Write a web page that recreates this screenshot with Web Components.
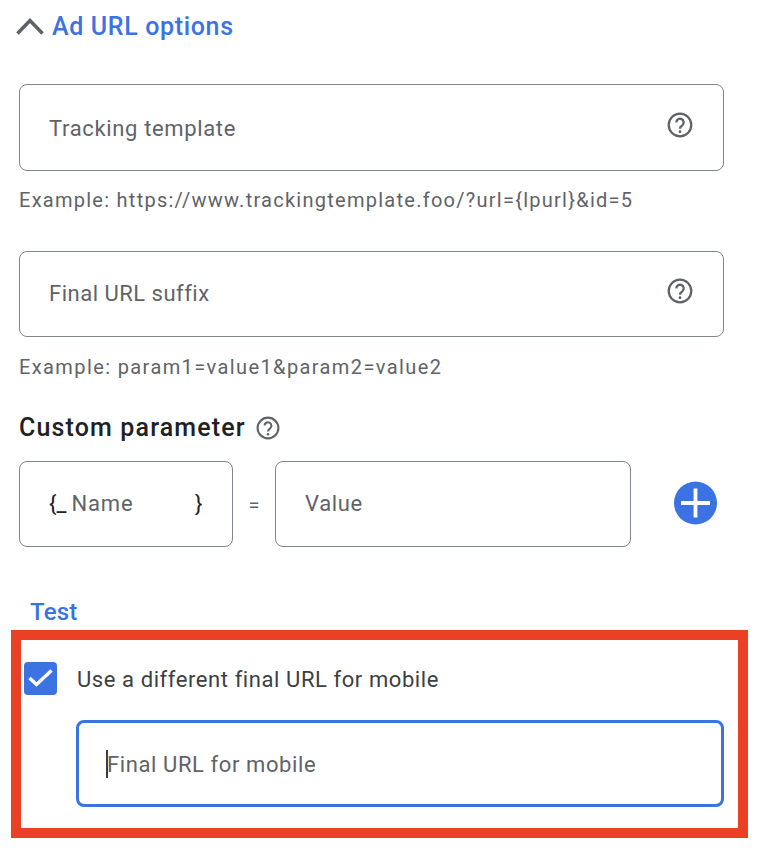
<!DOCTYPE html>
<html><head><meta charset="utf-8"><style>
html,body{margin:0;background:#fff}
body{width:764px;height:862px;overflow:hidden;font-family:Roboto,sans-serif}
</style></head><body>
<url-options></url-options>
<script>
const HELP=(s,extra='')=>`<svg ${extra} width="${s}" height="${s}" viewBox="0 0 24 24" fill="none" aria-hidden="true"><circle cx="12" cy="12" r="10.4" stroke="#5f6368" stroke-width="2.1"/><path d="M8.6 9.6a3.4 3.4 0 1 1 5.5 2.7c-1.2.9-2.1 1.6-2.1 3.1" stroke="#5f6368" stroke-width="2.1"/><circle cx="12" cy="18.2" r="1.3" fill="#5f6368"/></svg>`;
class TextField extends HTMLElement{
  constructor(){super();const r=this.attachShadow({mode:'open'});
  r.innerHTML=`<style>
  :host{display:flex;box-sizing:border-box;height:var(--h,87px);align-items:center;border:1px solid #80868b;border-radius:8px;padding-left:29px;padding-right:var(--pr,29px);background:#fff;color:#5f6368;font:22px/28px Roboto,sans-serif;letter-spacing:var(--ls,.65px);position:relative}
  .t{flex:1;white-space:nowrap;position:relative;top:var(--t,1px)}
  ::slotted(svg){position:relative;top:-3px}
  </style><span class="t"><slot></slot></span><slot name="end"></slot>`;}
}
class HelpText extends HTMLElement{
  constructor(){super();const r=this.attachShadow({mode:'open'});
  r.innerHTML=`<style>:host{display:block;font:20px/24px Roboto,sans-serif;color:#5f6368;letter-spacing:var(--hs,1.26px);white-space:nowrap}</style><slot></slot>`;}
}
class UrlOptions extends HTMLElement{
  constructor(){super();const r=this.attachShadow({mode:'open'});
  r.innerHTML=`<style>
  :host{display:block;box-sizing:border-box;width:764px;height:862px;padding:0 40px 0 19px;font-family:Roboto,sans-serif}
  .head{display:flex;align-items:center;gap:8px;height:52px;margin-left:-3px}
  .head span{font:500 25px/30px Roboto,sans-serif;color:#3b73e3;letter-spacing:.65px;position:relative;top:1px}
  .f1{margin-top:32px}
  help-text{margin-top:17px}
  .f2{margin-top:39px;--h:86px;--t:0px;--ls:.5px}
  .h2{margin-top:18px;--hs:1.39px}
  .cp{display:flex;align-items:center;gap:10px;margin-top:33px;height:32px;font:500 25px/32px Roboto,sans-serif;color:#202124;letter-spacing:1.15px;white-space:nowrap}
  .row{display:flex;align-items:center;margin-top:17px}
  .name{width:214px;flex:none;--h:86px;--t:0px;--ls:.9px;color:#5f6368}
  .b{color:#202124;font-size:22px;letter-spacing:0}
  .n{margin-left:5px}
  .eq{width:42px;text-align:center;font:20px/24px Roboto,sans-serif;color:#5f6368;position:relative;top:1px}
  .val{width:356px;flex:none;--h:86px;--t:0px}
  .plus{margin-left:43px;position:relative;top:-1px;display:block}
  .test{margin:50px 0 0 11px;font:500 24px/30px Roboto,sans-serif;color:#3b73e3;letter-spacing:.2px}
  .box{box-sizing:border-box;margin:3px 0 0 -8px;width:737px;height:208px;border:10px solid #ea4025;padding:22px 14px 0 3px}
  .chk{display:flex;align-items:center;gap:20px;height:33px}
  .cb{width:33px;height:33px;flex:none;background:#3b73e3;border-radius:4px;display:block}
  .chk span{font:22px/28px Roboto,sans-serif;color:#3c4043;letter-spacing:.58px;white-space:nowrap;position:relative;top:1px}
  .inp{box-sizing:border-box;height:87px;margin:25px 0 0 52px;border:3px solid #3b73e3;border-radius:8px;display:flex;align-items:center;padding-left:27px;font:22px/28px Roboto,sans-serif;color:#5f6368;letter-spacing:.6px}
  .inp span{position:relative;top:1px}
  .caret{width:2px;height:28px;background:#3c4043;margin-right:-1px;flex:none}
  </style>
  <div class="head"><svg width="28" height="18" viewBox="0 0 28 18" fill="none"><path d="M1.500 16.500 14 3.500 26.500 16.500" stroke="#5f6368" stroke-width="3.600"/></svg><span>Ad URL options</span></div>
  <text-field class="f1">Tracking template${HELP(26,'slot="end"')}</text-field>
  <help-text>Example: https://www.trackingtemplate.foo/?url={lpurl}&amp;id=5</help-text>
  <text-field class="f2" >Final URL suffix${HELP(26,'slot="end"')}</text-field>
  <help-text class="h2">Example: param1=value1&amp;param2=value2</help-text>
  <div class="cp"><span>Custom parameter</span>${HELP(24)}</div>
  <div class="row"><text-field class="name"><span class="b">{_</span><span class="n">Name</span><span class="b" style="position:absolute;left:146px">}</span></text-field><div class="eq">=</div><text-field class="val">Value</text-field>
  <svg class="plus" width="43" height="44" viewBox="0 0 43 44"><circle cx="21.500" cy="22" r="21.500" fill="#3b73e3"/><path d="M7 22h29M21.500 7.500v29" stroke="#fff" stroke-width="3.800"/></svg></div>
  <div class="test">Test</div>
  <div class="box">
    <div class="chk"><svg class="cb" viewBox="0 0 33 33"><path d="M5.500 16 12.500 22.500 27.500 8.500" fill="none" stroke="#fff" stroke-width="3.400"/></svg><span>Use a different final URL for mobile</span></div>
    <div class="inp"><i class="caret"></i><span>Final URL for mobile</span></div>
  </div>`;
  r.querySelectorAll('.f1,.f2').forEach(f=>f.style.setProperty('--pr','30px'));
  }
}
customElements.define('text-field',TextField);
customElements.define('help-text',HelpText);
customElements.define('url-options',UrlOptions);
</script>
</body></html>
